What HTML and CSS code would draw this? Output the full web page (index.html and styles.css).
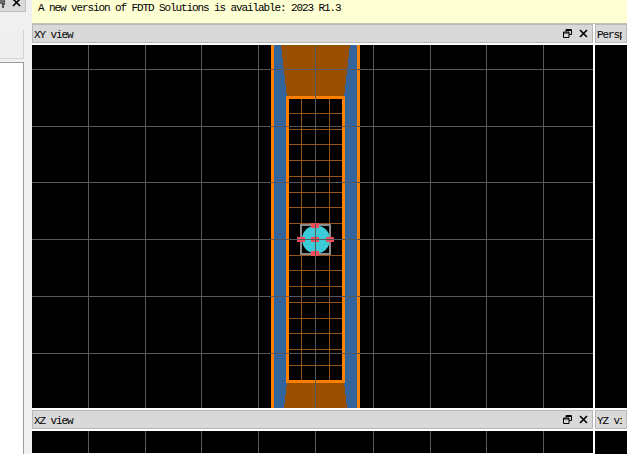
FILE: index.html
```html
<!DOCTYPE html>
<html lang="en">
<head>
<meta charset="utf-8">
<title>FDTD Solutions</title>
<link rel="stylesheet" href="styles.css">
</head>
<body>
<div class="app">
  <aside class="side">
    <div class="side-bar">
      <svg class="ico side-restore" width="6" height="8" viewBox="0 0 6 8"><path d="M0 3H4V8M0 1H6V5" fill="none" stroke="#000" stroke-width="1.2"/></svg>
      <svg class="ico" width="9" height="8" viewBox="0 0 9 8"><path d="M1 -1L8 6M8 -1L1 6" stroke="#000" stroke-width="1.6"/></svg>
    </div>
    <div class="side-box"></div>
    <div class="side-list"></div>
  </aside>
  <main class="main">
    <div class="banner">A new version of FDTD Solutions is available: 2023 R1.3</div>
    <div class="views">
      <section class="view">
        <header class="title">
          <span class="title-text">XY view</span>
          <svg class="ico" width="9" height="9" viewBox="0 0 9 9"><path d="M3 2.500V0.500H8.500V5.500H6M0.500 3H6V8.500H0.500Z" fill="none" stroke="#000" stroke-width="1"/><path d="M3 1.500H9M0 4H6" stroke="#000" stroke-width="1"/></svg>
          <svg class="ico" width="9" height="9" viewBox="0 0 9 9"><path d="M1 1L8 8M8 1L1 8" stroke="#000" stroke-width="1.6"/></svg>
        </header>
        <svg class="canvas" viewBox="32 45 561 363" width="561" height="363" shape-rendering="crispEdges">
          <rect x="271" y="45" width="89" height="363" fill="#ff7f00"/>
          <rect x="274" y="45" width="83" height="363" fill="#33659c"/>
          <polygon points="281,45 350,45 344,97 287,97" fill="#994f00"/>
          <polygon points="287,382 344,382 347,408 284,408" fill="#994f00"/>
          <rect x="287" y="97" width="57" height="285" fill="#000"/>
          <g class="mesh">
            <path d="M301.500 99V380M329.500 99V380"/>
            <path d="M289 113.500H342M289 129.500H342M289 144.500H342M289 160.500H342M289 176.500H342M289 192.500H342M289 207.500H342M289 223.500H342M289 255.500H342M289 270.500H342M289 286.500H342M289 302.500H342M289 318.500H342M289 333.500H342M289 349.500H342M289 365.500H342"/>
          </g>
          <rect x="287.500" y="97.500" width="56" height="284" fill="none" stroke="#ff7f00" stroke-width="3"/>
          <circle cx="316" cy="239.500" r="14" fill="#3ccbd6" shape-rendering="auto"/>
          <rect x="301" y="225" width="29" height="29" fill="none" stroke="#8c8c8c" stroke-width="2"/>
          <g fill="#f24b5c">
            <rect x="311" y="223" width="8" height="5"/>
            <rect x="311" y="251" width="8" height="5"/>
            <rect x="297" y="237" width="8" height="5"/>
            <rect x="326" y="237" width="8" height="5"/>
            <rect x="311" y="237" width="8" height="5"/>
          </g>
          <g class="grid">
            <path d="M88.500 45V408M145.500 45V408M201.500 45V408M258.500 45V408M315.500 45V408M373.500 45V408M430.500 45V408M486.500 45V408M543.500 45V408"/>
            <path d="M32 69.500H593M32 126.500H593M32 182.500H593M32 239.500H593M32 296.500H593M32 353.500H593"/>
          </g>
        </svg>
      </section>
      <section class="view">
        <header class="title"><span class="title-text">Perspective view</span></header>
        <div class="black"></div>
      </section>
      <section class="view">
        <header class="title">
          <span class="title-text">XZ view</span>
          <svg class="ico" width="9" height="9" viewBox="0 0 9 9"><path d="M3 2.500V0.500H8.500V5.500H6M0.500 3H6V8.500H0.500Z" fill="none" stroke="#000" stroke-width="1"/><path d="M3 1.500H9M0 4H6" stroke="#000" stroke-width="1"/></svg>
          <svg class="ico" width="9" height="9" viewBox="0 0 9 9"><path d="M1 1L8 8M8 1L1 8" stroke="#000" stroke-width="1.6"/></svg>
        </header>
        <svg class="canvas" viewBox="32 432 561 22" width="561" height="22" shape-rendering="crispEdges">
          <g class="grid">
            <path d="M88.500 432V454M145.500 432V454M201.500 432V454M258.500 432V454M315.500 432V454M373.500 432V454M430.500 432V454M486.500 432V454M543.500 432V454"/>
          </g>
        </svg>
      </section>
      <section class="view">
        <header class="title"><span class="title-text">YZ view</span></header>
        <div class="black"></div>
      </section>
    </div>
  </main>
</div>
</body>
</html>
```
FILE: styles.css
```css
* { box-sizing: border-box; }
html, body { margin: 0; height: 454px; overflow: hidden; background: #f0f0f0; }
.app { display: flex; width: 627px; height: 454px; overflow: hidden; }
.side { width: 32px; flex: none; display: flex; flex-direction: column; background: #f0f0f0; }
.side-bar { width: 26px; height: 12px; background: #d9d9d9; border-right: 1px solid #bdbdbd; border-bottom: 1px solid #bdbdbd; display: flex; align-items: flex-start; gap: 7px; overflow: hidden; }
.side-restore { margin-left: -1px; }
.side-box { width: 24px; height: 29px; margin-top: 18px; background: #efefef; border-right: 1px solid #d4d4d4; border-bottom: 1px solid #d4d4d4; }
.side-list { width: 24px; flex: 1; margin-top: 3px; background: #fff; border-top: 1px solid #9c9ca4; border-right: 1px solid #9c9ca4; }
.main { width: 595px; flex: none; display: flex; flex-direction: column; background: #fff; }
.banner { height: 24px; padding: 1px 0 0 6px; background: #ffffd4; border-bottom: 1px solid #c4c4bc; font: 11px/14px "Liberation Mono", monospace; letter-spacing: -1.1px; color: #000; white-space: nowrap; }
.views { display: grid; grid-template-columns: 561px 32px; grid-template-rows: 384px 44px; column-gap: 2px; row-gap: 2px; }
.view { display: flex; flex-direction: column; min-width: 0; overflow: hidden; }
.title { height: 19px; flex: none; display: flex; align-items: center; gap: 7px; padding: 0 4px 0 1px; background: #d9d9d9; border: 1px solid #b8b8b8; }
.title-text { flex: 1; padding-top: 2px; font: 11px/14px "Liberation Mono", monospace; letter-spacing: -1.1px; color: #000; white-space: nowrap; overflow: hidden; }
.ico { flex: none; display: block; }
.canvas { display: block; margin-top: 2px; background: #000; flex: none; }
.black { flex: 1; margin-top: 2px; background: #000; }
.grid path { fill: none; stroke: #585858; stroke-width: 1; }
.mesh path { fill: none; stroke: #96541a; stroke-width: 1; }
```
